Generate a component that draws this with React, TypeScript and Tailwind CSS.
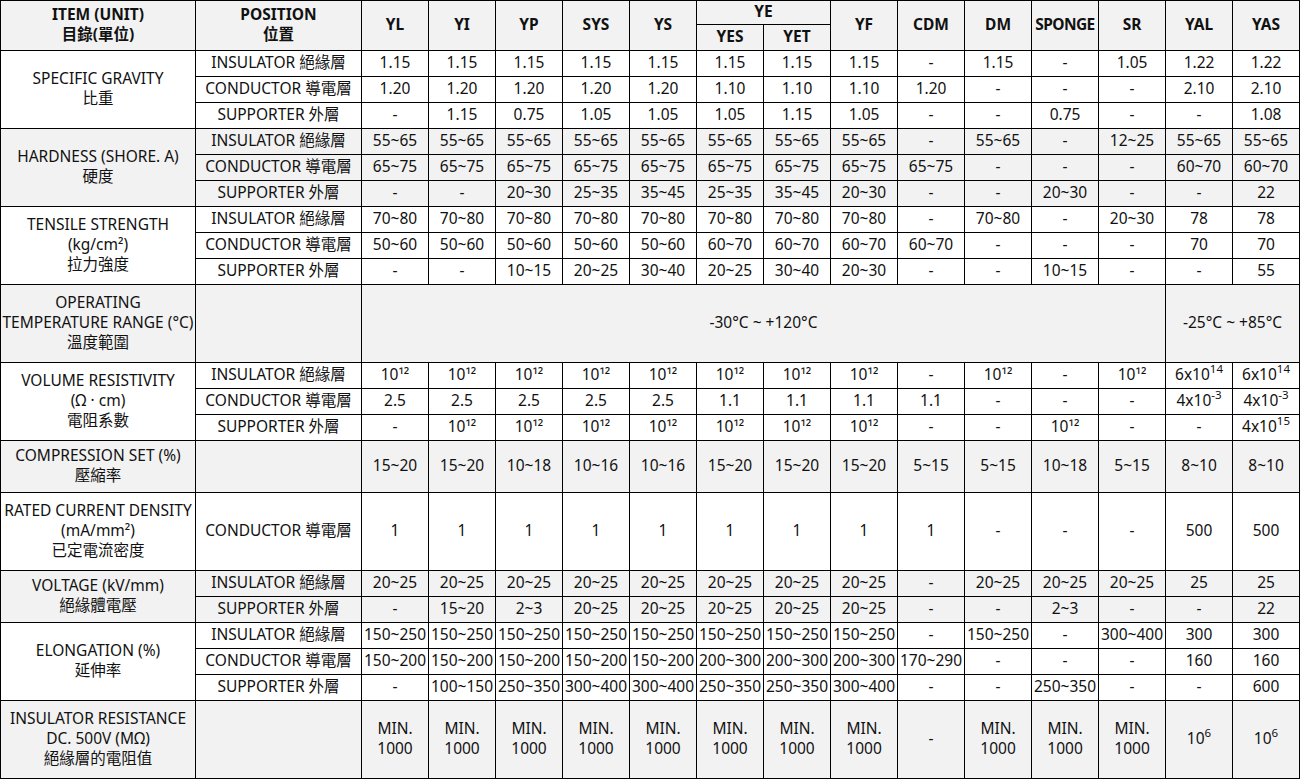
import React from "react"

type Cell = React.ReactNode

const e12 = "10¹²"
const pow = (base: string, exp: string) => (
    <span>
        {base}
        <sup className="text-[11.5px] relative -top-[7px]">{exp}</sup>
    </span>
)
const min1000 = (
    <span>
        MIN.
        <br />
        1000
    </span>
)

const rep = (v: Cell, n: number): Cell[] => Array.from({ length: n }, () => v)

type Group = {
    label: React.ReactNode
    bg: string
    h: string
    rows: { pos: string; vals: Cell[] }[]
}

const groups: Group[] = [
    {
        label: <>SPECIFIC GRAVITY<br />比重</>,
        bg: "bg-white",
        h: "h-[26px]",
        rows: [
            { pos: "INSULATOR 絕緣層", vals: [...rep("1.15", 8), "-", "1.15", "-", "1.05", "1.22", "1.22"] },
            { pos: "CONDUCTOR 導電層", vals: [...rep("1.20", 5), ...rep("1.10", 3), "1.20", "-", "-", "-", "2.10", "2.10"] },
            { pos: "SUPPORTER 外層", vals: ["-", "1.15", "0.75", "1.05", "1.05", "1.05", "1.15", "1.05", "-", "-", "0.75", "-", "-", "1.08"] },
        ],
    },
    {
        label: <>HARDNESS (SHORE. A)<br />硬度</>,
        bg: "bg-[#f2f2f2]",
        h: "h-[26px]",
        rows: [
            { pos: "INSULATOR 絕緣層", vals: [...rep("55~65", 8), "-", "55~65", "-", "12~25", "55~65", "55~65"] },
            { pos: "CONDUCTOR 導電層", vals: [...rep("65~75", 9), "-", "-", "-", "60~70", "60~70"] },
            { pos: "SUPPORTER 外層", vals: ["-", "-", "20~30", "25~35", "35~45", "25~35", "35~45", "20~30", "-", "-", "20~30", "-", "-", "22"] },
        ],
    },
    {
        label: <>TENSILE STRENGTH<br />(kg/cm²)<br />拉力強度</>,
        bg: "bg-white",
        h: "h-[26px]",
        rows: [
            { pos: "INSULATOR 絕緣層", vals: [...rep("70~80", 8), "-", "70~80", "-", "20~30", "78", "78"] },
            { pos: "CONDUCTOR 導電層", vals: [...rep("50~60", 5), ...rep("60~70", 4), "-", "-", "-", "70", "70"] },
            { pos: "SUPPORTER 外層", vals: ["-", "-", "10~15", "20~25", "30~40", "20~25", "30~40", "20~30", "-", "-", "10~15", "-", "-", "55"] },
        ],
    },
]

const groups2: Group[] = [
    {
        label: <>VOLUME RESISTIVITY<br />(Ω · cm)<br />電阻系數</>,
        bg: "bg-white",
        h: "h-[26px]",
        rows: [
            { pos: "INSULATOR 絕緣層", vals: [...rep(e12, 8), "-", e12, "-", e12, pow("6x10", "14"), pow("6x10", "14")] },
            { pos: "CONDUCTOR 導電層", vals: [...rep("2.5", 5), ...rep("1.1", 4), "-", "-", "-", pow("4x10", "-3"), pow("4x10", "-3")] },
            { pos: "SUPPORTER 外層", vals: ["-", ...rep(e12, 7), "-", "-", e12, "-", "-", pow("4x10", "15")] },
        ],
    },
    {
        label: <>COMPRESSION SET (%)<br />壓縮率</>,
        bg: "bg-[#f2f2f2]",
        h: "h-[52px]",
        rows: [
            { pos: "", vals: ["15~20", "15~20", "10~18", "10~16", "10~16", "15~20", "15~20", "15~20", "5~15", "5~15", "10~18", "5~15", "8~10", "8~10"] },
        ],
    },
    {
        label: <>RATED CURRENT DENSITY<br />(mA/mm²)<br />已定電流密度</>,
        bg: "bg-white",
        h: "h-[78px]",
        rows: [{ pos: "CONDUCTOR 導電層", vals: [...rep("1", 9), "-", "-", "-", "500", "500"] }],
    },
    {
        label: <>VOLTAGE (kV/mm)<br />絕緣體電壓</>,
        bg: "bg-[#f2f2f2]",
        h: "h-[26px]",
        rows: [
            { pos: "INSULATOR 絕緣層", vals: [...rep("20~25", 8), "-", "20~25", "20~25", "20~25", "25", "25"] },
            { pos: "SUPPORTER 外層", vals: ["-", "15~20", "2~3", ...rep("20~25", 5), "-", "-", "2~3", "-", "-", "22"] },
        ],
    },
    {
        label: <>ELONGATION (%)<br />延伸率</>,
        bg: "bg-white",
        h: "h-[26px]",
        rows: [
            { pos: "INSULATOR 絕緣層", vals: [...rep("150~250", 8), "-", "150~250", "-", "300~400", "300", "300"] },
            { pos: "CONDUCTOR 導電層", vals: [...rep("150~200", 5), ...rep("200~300", 3), "170~290", "-", "-", "-", "160", "160"] },
            { pos: "SUPPORTER 外層", vals: ["-", "100~150", "250~350", "300~400", "300~400", "250~350", "250~350", "300~400", "-", "-", "250~350", "-", "-", "600"] },
        ],
    },
    {
        label: <>INSULATOR RESISTANCE<br />DC. 500V (MΩ)<br />絕緣層的電阻值</>,
        bg: "bg-[#f2f2f2]",
        h: "h-[78px]",
        rows: [{ pos: "", vals: [...rep(min1000, 8), "-", min1000, min1000, min1000, pow("10", "6"), pow("10", "6")] }],
    },
]

const td = "border border-black p-0 pb-[3px] text-center align-middle whitespace-nowrap"

function GroupRows({ g }: { g: Group }) {
    return (
        <>
            {g.rows.map((r, i) => (
                <tr key={i} className={`${g.bg} ${g.h}`}>
                    {i === 0 && (
                        <td rowSpan={g.rows.length} className={td}>
                            {g.label}
                        </td>
                    )}
                    <td className={td}>{r.pos}</td>
                    {r.vals.map((v, j) => (
                        <td key={j} className={td}>
                            {v}
                        </td>
                    ))}
                </tr>
            ))}
        </>
    )
}

export default function App() {
    const heads = ["YL", "YI", "YP", "SYS", "YS"]
    const heads2 = ["YF", "CDM", "DM", "SPONGE", "SR", "YAL", "YAS"]
    return (
        <div className="w-[1300px] h-[780px] bg-white overflow-hidden">
            <table
                className="table-fixed border-collapse w-[1300px] text-[15.5px] leading-[20px] text-[#111]"
                style={{ fontFamily: '"Noto Sans", "Noto Sans CJK TC", sans-serif' }}
            >
                <colgroup>
                    <col className="w-[195px]" />
                    <col className="w-[166px]" />
                    {Array.from({ length: 14 }, (_, i) => (
                        <col key={i} className="w-[67px]" />
                    ))}
                </colgroup>
                <thead className="bg-[#f2f2f2] font-bold">
                    <tr className="h-[24px]">
                        <th rowSpan={2} className={`${td} font-bold`}>
                            ITEM (UNIT)
                            <br />
                            目錄(單位)
                        </th>
                        <th rowSpan={2} className={`${td} font-bold`}>
                            POSITION
                            <br />
                            位置
                        </th>
                        {heads.map((h) => (
                            <th key={h} rowSpan={2} className={`${td} font-bold`}>
                                {h}
                            </th>
                        ))}
                        <th colSpan={2} className={`${td} font-bold`}>
                            YE
                        </th>
                        {heads2.map((h) => (
                            <th key={h} rowSpan={2} className={`${td} font-bold ${h === "SPONGE" ? "tracking-[-0.6px]" : ""}`}>
                                {h}
                            </th>
                        ))}
                    </tr>
                    <tr className="h-[26px]">
                        <th className={`${td} font-bold`}>YES</th>
                        <th className={`${td} font-bold`}>YET</th>
                    </tr>
                </thead>
                <tbody>
                    {groups.map((g, i) => (
                        <GroupRows key={i} g={g} />
                    ))}
                    <tr className="bg-[#f2f2f2] h-[78px]">
                        <td className={td}>
                            OPERATING
                            <br />
                            TEMPERATURE RANGE (°C)
                            <br />
                            溫度範圍
                        </td>
                        <td className={td}></td>
                        <td colSpan={12} className={td}>
                            -30°C ~ +120°C
                        </td>
                        <td colSpan={2} className={td}>
                            -25°C ~ +85°C
                        </td>
                    </tr>
                    {groups2.map((g, i) => (
                        <GroupRows key={i} g={g} />
                    ))}
                </tbody>
            </table>
        </div>
    )
}
